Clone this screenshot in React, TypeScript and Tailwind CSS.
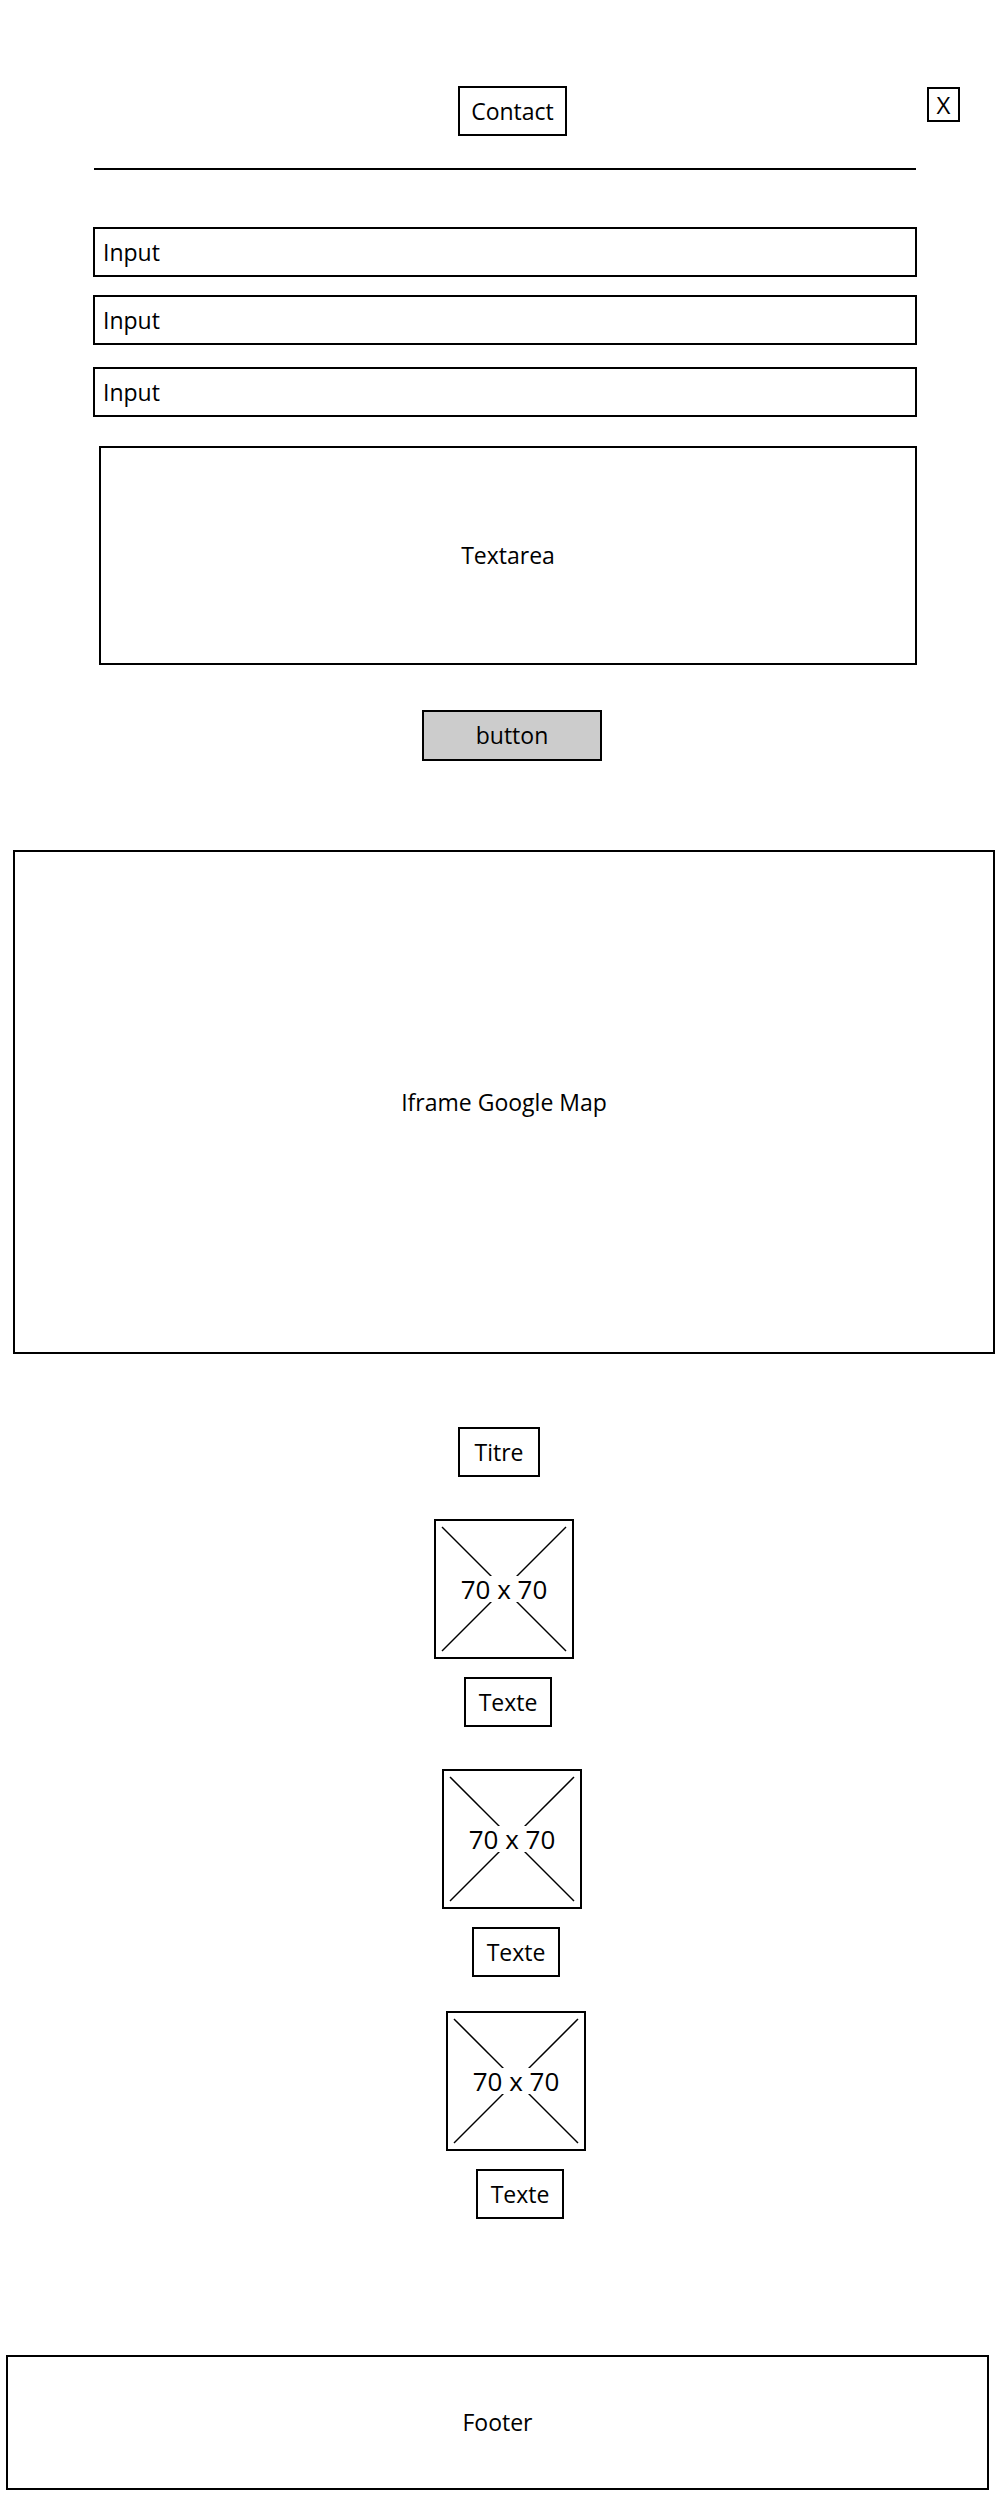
const font = "font-['Open_Sans',_'DejaVu_Sans',_sans-serif]";

function Placeholder({ className }: { className: string }) {
  return (
    <div className={`relative h-[140px] w-[140px] border-2 border-black bg-white ${className}`}>
      <svg className="absolute inset-0" width="136" height="136" viewBox="0 0 136 136">
        <line x1="6" y1="6" x2="130" y2="130" stroke="#000" strokeWidth="1.5" />
        <line x1="130" y1="6" x2="6" y2="130" stroke="#000" strokeWidth="1.5" />
      </svg>
      <div className="absolute inset-0 flex items-center justify-center">
        <span className="bg-white px-[2px] text-[26px] leading-[26px] text-black">70 x 70</span>
      </div>
    </div>
  );
}

function Label({ text, className }: { text: string; className: string }) {
  return (
    <div
      className={`flex h-[50px] items-center justify-center border-2 border-black bg-white text-[23px] text-black ${className}`}
    >
      {text}
    </div>
  );
}

function Field() {
  return (
    <div className="flex h-[50px] items-center border-2 border-black bg-white pl-[8px] text-[23px] text-black">
      Input
    </div>
  );
}

export default function App() {
  return (
    <main className={`min-h-[2500px] w-[1000px] bg-white ${font}`}>
      <header className="flex items-start pt-[86px]">
        <Label text="Contact" className="ml-[458px] w-[109px]" />
        <div className="ml-auto mr-[40px] mt-[1px] flex h-[35px] w-[33px] items-center justify-center border-2 border-black text-[24px] leading-none text-black">
          X
        </div>
      </header>

      <hr className="ml-[94px] mt-[32px] w-[822px] border-t-2 border-black" />

      <form className="ml-[93px] mt-[57px] flex w-[824px] flex-col">
        <Field />
        <div className="mt-[18px]">
          <Field />
        </div>
        <div className="mt-[22px]">
          <Field />
        </div>
        <div className="ml-[6px] mt-[29px] flex h-[219px] w-[818px] items-center justify-center border-2 border-black text-[23px] text-black">
          Textarea
        </div>
        <div className="ml-[329px] mt-[45px] flex h-[51px] w-[180px] items-center justify-center border-2 border-black bg-[#cccccc] text-[23px] text-black">
          button
        </div>
      </form>

      <section className="ml-[13px] mt-[89px] flex h-[504px] w-[982px] items-center justify-center border-2 border-black text-[23px] text-black">
        Iframe Google Map
      </section>

      <section className="mt-[73px] flex flex-col">
        <Label text="Titre" className="ml-[458px] w-[82px]" />
        <Placeholder className="ml-[434px] mt-[42px]" />
        <Label text="Texte" className="ml-[464px] mt-[18px] w-[88px]" />
        <Placeholder className="ml-[442px] mt-[42px]" />
        <Label text="Texte" className="ml-[472px] mt-[18px] w-[88px]" />
        <Placeholder className="ml-[446px] mt-[34px]" />
        <Label text="Texte" className="ml-[476px] mt-[18px] w-[88px]" />
      </section>

      <footer className="ml-[6px] mt-[136px] flex h-[135px] w-[983px] items-center justify-center border-2 border-black text-[23px] text-black">
        Footer
      </footer>
    </main>
  );
}
